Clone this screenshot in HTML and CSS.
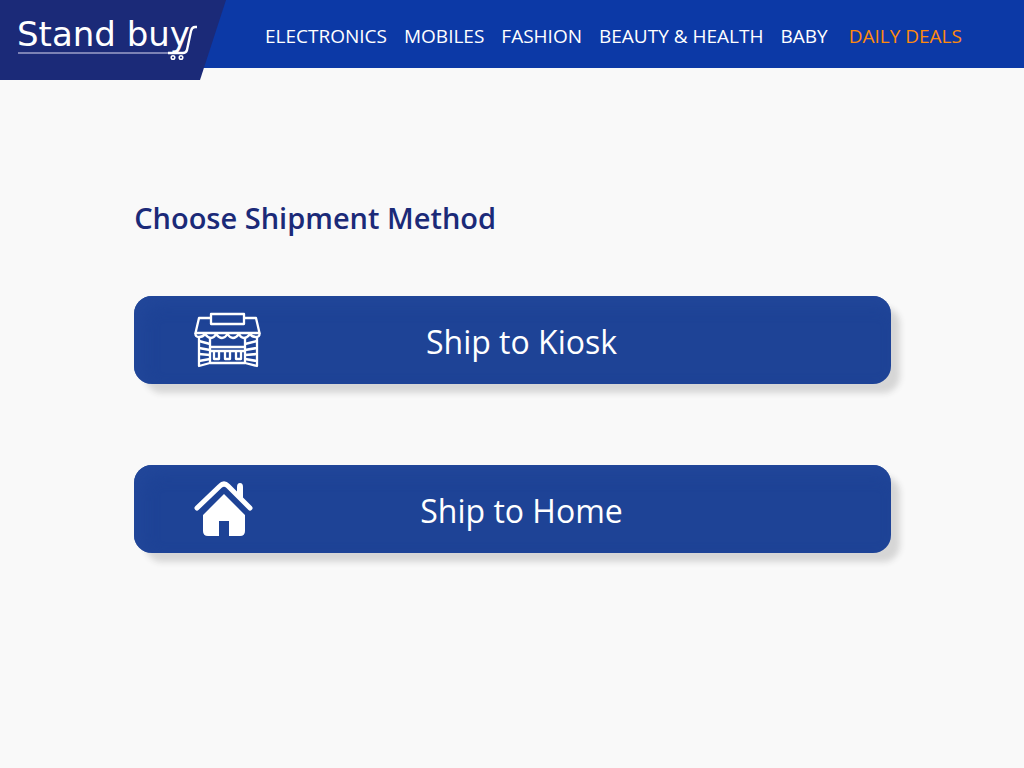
FILE: index.html
```html
<!DOCTYPE html>
<html lang="en">
<head>
<meta charset="utf-8">
<meta name="viewport" content="width=device-width, initial-scale=1">
<title>Stand buy - Choose Shipment Method</title>
<link rel="stylesheet" href="styles.css">
</head>
<body>
<header class="header">
  <a class="brand" href="#">
    <svg class="brand-logo" width="184" height="52" viewBox="0 0 184 52" fill="none" stroke="#fff">
      <text class="brand-text" x="-1" y="34">Stand buy</text>
      <path d="M0 41H151" stroke="#7c82b5" stroke-width="2"/>
      <path d="M150 41H165Q168 41 169 38L173 19Q174 15 177 15H179" stroke-width="2.400"/>
      <circle cx="155" cy="45.500" r="1.800" stroke-width="1.500"/>
      <circle cx="163" cy="45.500" r="1.800" stroke-width="1.500"/>
    </svg>
  </a>
  <nav class="nav">
    <a href="#">ELECTRONICS</a>
    <a href="#">MOBILES</a>
    <a href="#">FASHION</a>
    <a href="#">BEAUTY &amp; HEALTH</a>
    <a href="#">BABY</a>
    <a class="deals" href="#">DAILY DEALS</a>
  </nav>
</header>
<main class="main">
  <h1 class="title">Choose Shipment Method</h1>
  <div class="options">
    <button class="option" type="button">
      <svg class="option-icon" width="68" height="56" viewBox="0 0 68 56" fill="none" stroke="#fff" stroke-width="2.300" stroke-linejoin="round" aria-hidden="true">
        <path d="M17 2H50V12H17Z"/>
        <path d="M17 6H5L1.500 21H65.500L62 6H50"/>
        <path d="M1.500 21Q1 25 5 25Q9 25 11 22Q14 26 17 26Q20 26 22 22Q25 26 28 26Q31 26 33.500 22Q36 26 39 26Q42 26 45 22Q47 26 50 26Q53 26 56 22Q58 25 62 25Q66 25 65.500 21"/>
        <path d="M5 25V54L16 51V26M63 25V54L51 51V26"/>
        <path d="M5 29L16 32M5 36L16 38M5 42L16 43M5 49L16 47M63 29L51 32M63 36L51 38M63 42L51 43M63 49L51 47" stroke-width="2.600"/>
        <path d="M16 35H51M16 39H51M16 51H51"/>
        <path d="M20 39V47H25V39M31 39V47H36V39M42 39V47H47V39"/>
      </svg>
      <span class="option-label">Ship to Kiosk</span>
    </button>
    <button class="option" type="button">
      <svg class="option-icon" width="68" height="56" viewBox="0 0 68 56" fill="#fff" aria-hidden="true">
        <path d="M3 27L26 5Q30 1 34 5L56 27" fill="none" stroke="#fff" stroke-width="5" stroke-linecap="round" stroke-linejoin="round"/>
        <path d="M43 6Q43 2 46 2Q49 2 49 6V20L43 14Z"/>
        <path d="M30 13L51 34V50Q51 55 46 55H35V40H25V55H14Q9 55 9 50V34Z"/>
      </svg>
      <span class="option-label">Ship to Home</span>
    </button>
  </div>
</main>
</body>
</html>
```
FILE: styles.css
```css
* { box-sizing: border-box; }

body {
  margin: 0;
  background: #f9f9f9;
  font-family: "Open Sans", "Noto Sans", sans-serif;
}

.header {
  display: flex;
  align-items: flex-start;
  height: 80px;
  background: linear-gradient(#0c39a6, #0c39a6) top / 100% 68px no-repeat;
}

.brand {
  flex: none;
  width: 226px;
  height: 80px;
  padding: 12px 0 0 18px;
  background: #1b2a78;
  clip-path: polygon(0 0, 100% 0, 200px 100%, 0 100%);
}

.brand-logo {
  display: block;
  overflow: visible;
}

.brand-text {
  font-family: "DejaVu Sans", sans-serif;
  font-size: 34px;
  fill: #fff;
  stroke: none;
}

.nav {
  display: flex;
  align-items: center;
  gap: 17px;
  height: 72px;
  padding-left: 39px;
}

.nav a {
  color: #fff;
  font-size: 19px;
  line-height: 28px;
  text-decoration: none;
  white-space: nowrap;
}

.nav .deals {
  margin-left: 4px;
  color: #ff8a0c;
}

.main { padding: 116px 13% 64px 13.1%; }

.title {
  margin: 0 0 56px;
  color: #1b2a78;
  font-size: 29px;
  font-weight: 600;
  line-height: 44px;
}

.options {
  display: grid;
  gap: 81px;
}

.option {
  display: grid;
  grid-template-columns: 68px 1fr 68px;
  align-items: center;
  width: 100%;
  height: 88px;
  padding: 0 42px 0 60px;
  border: 0;
  border-radius: 18px;
  background: #1e4396;
  box-shadow: 10px 10px 6px -1px #d6d6d6, inset 8px 8px 16px #22479a;
  color: #fff;
  font-family: inherit;
  font-size: 32px;
  line-height: 44px;
  cursor: pointer;
}

.option-label { padding-top: 4px; }
```
